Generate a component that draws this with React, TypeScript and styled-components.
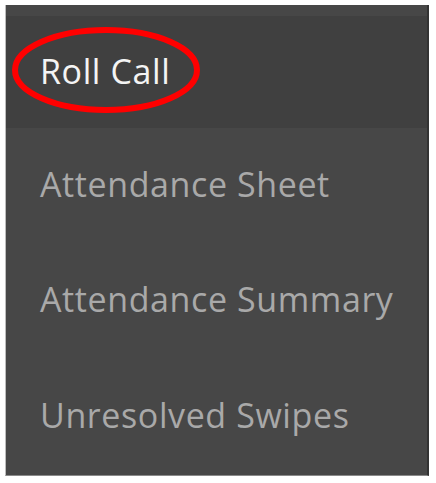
import React from 'react';
import styled, { createGlobalStyle } from 'styled-components';

const GlobalStyle = createGlobalStyle`
  html, body {
    margin: 0;
    padding: 0;
    background: #ffffff;
  }
  body {
    font-family: 'Open Sans', 'Noto Sans', sans-serif;
  }
`;

const ITEMS = ['Roll Call', 'Attendance Sheet', 'Attendance Summary', 'Unresolved Swipes'];

const App = (): JSX.Element => {
  return (
    <>
      <GlobalStyle />
      <Page>
        <Menu>
          {ITEMS.map((item, i) => (
            <MenuItem key={item} active={i === 0}>
              <ItemLabel active={i === 0}>{item}</ItemLabel>
              {i === 0 && (
                <Highlight viewBox="0 0 200 96" width="200" height="96">
                  <ellipse cx="100" cy="48" rx="91" ry="40" fill="none" stroke="#ff0000" strokeWidth="6" />
                </Highlight>
              )}
            </MenuItem>
          ))}
        </Menu>
      </Page>
    </>
  );
};

export default App;

const Page = styled.div`
  padding: 5px;
  width: 436px;
  height: 483px;
  box-sizing: border-box;
`;

const Menu = styled.nav`
  width: 424px;
  height: 471px;
  box-sizing: border-box;
  display: flex;
  flex-direction: column;
  background: #474747;
  border-left: 1px solid #bdbdbd;
  border-right: 2px solid #333333;
  border-bottom: 1px solid #8a8a8a;
`;

const MenuItem = styled.div<{ active: boolean }>`
  position: relative;
  display: flex;
  align-items: center;
  padding-left: 34px;
  box-sizing: border-box;
  height: ${(p) => (p.active ? '123px' : '116px')};
  background: ${(p) => (p.active ? '#404040' : '#474747')};
  border-top: ${(p) => (p.active ? '11px solid #474747' : 'none')};
`;

const ItemLabel = styled.span<{ active: boolean }>`
  font-size: 34px;
  letter-spacing: 0.6px;
  color: ${(p) => (p.active ? '#f4f4f4' : '#a9a9a9')};
  margin-top: ${(p) => (p.active ? '-2px' : '-4px')};
`;

const Highlight = styled.svg`
  position: absolute;
  left: 0;
  top: 6px;
  pointer-events: none;
`;
